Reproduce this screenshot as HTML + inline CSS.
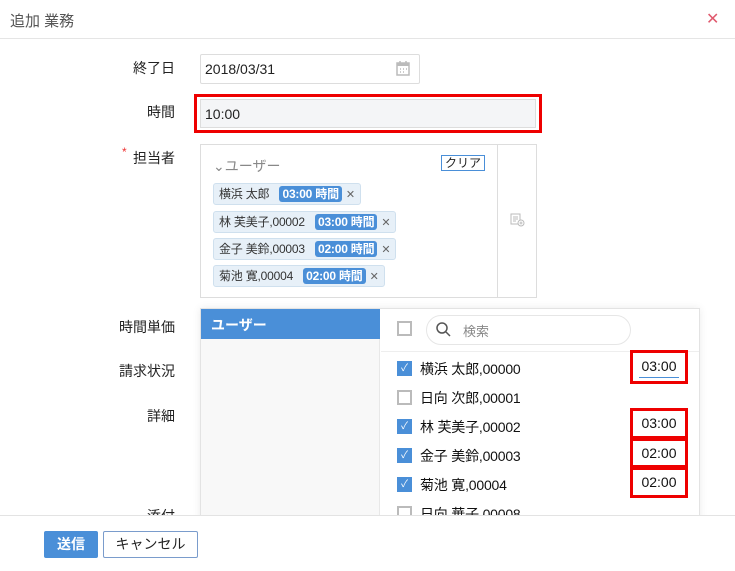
<!DOCTYPE html>
<html><head><meta charset="utf-8"><style>
*{margin:0;padding:0;box-sizing:border-box}
body{width:735px;height:571px;position:relative;overflow:hidden;background:#fff;font-family:"Liberation Sans","Noto Sans CJK JP",sans-serif;font-size:14px;color:#222}
.a{position:absolute;white-space:nowrap}
.lbl{position:absolute;right:560px;font-size:14px;color:#222}
.tag{position:absolute;left:213px;height:22px;background:#e7f0f8;border:1px solid #cfe0ee;border-radius:3px;font-size:12px;color:#333;padding:2px 5px;line-height:16px;letter-spacing:-0.2px}
.bd{display:inline-block;background:#4a8fd8;color:#fff;font-weight:bold;border-radius:3px;padding:0 3px;margin-left:7px;font-size:12px;line-height:16px}
.tx{color:#666;margin-left:4px;font-size:11px}
.cb{position:absolute;left:397px;width:15px;height:15px;border:2px solid #bbb;background:#fff}
.cb.on{background:#4a8fd8;border-color:#4a8fd8;color:#fff;font-size:10px;line-height:11px;text-align:center}
.row{position:absolute;left:420px;font-size:14px;color:#111;letter-spacing:-0.2px}
.rb{position:absolute;left:630px;width:58px;border:3px solid #e00;background:#fff;text-align:center;font-size:14px;color:#111}
</style></head><body>
<div class="a" style="left:10px;top:10px;font-size:15px;color:#555">追加 業務</div>
<div class="a" style="left:706px;top:9px;font-size:16px;color:#e05a6e">✕</div>
<div class="a" style="left:0;top:38px;width:735px;height:1px;background:#e5e5e5"></div>

<div class="lbl" style="top:58px">終了日</div>
<div class="a" style="left:200px;top:54px;width:220px;height:30px;border:1px solid #ddd;border-radius:2px;padding:6px 4px;font-size:14px">2018/03/31</div>
<svg class="a" style="left:396px;top:61px" width="14" height="15" viewBox="0 0 14 15"><rect x="1" y="2" width="12" height="12" fill="none" stroke="#bbb" stroke-width="1.5"/><rect x="1" y="2" width="12" height="3" fill="#bbb"/><path d="M4 0v3M10 0v3" stroke="#bbb" stroke-width="1.5"/><path d="M4 8h1M7 8h1M10 8h1M4 11h1M7 11h1" stroke="#bbb" stroke-width="1.5"/></svg>

<div class="lbl" style="top:102px">時間</div>
<div class="a" style="left:194px;top:94px;width:348px;height:39px;border:3px solid #e00"></div>
<div class="a" style="left:200px;top:99px;width:336px;height:29px;background:#f4f5f7;border:1px solid #ddd;padding:6px 4px">10:00</div>

<div class="a" style="left:122px;top:145px;color:#e33;font-size:12px">*</div>
<div class="lbl" style="top:148px">担当者</div>
<div class="a" style="left:200px;top:144px;width:337px;height:154px;border:1px solid #ddd"></div>
<div class="a" style="left:497px;top:144px;width:1px;height:154px;background:#ddd"></div>
<svg class="a" style="left:510px;top:213px" width="15" height="14" viewBox="0 0 15 14"><rect x="1" y="1" width="9" height="10" fill="none" stroke="#bbb"/><path d="M3 4h5M3 6h5M3 8h3" stroke="#bbb"/><circle cx="11" cy="10" r="3" fill="#fff" stroke="#bbb"/><path d="M11 8.5v3M9.5 10h3" stroke="#bbb"/></svg>
<div class="a" style="left:213px;top:156px;font-size:14px;color:#888">⌄ユーザー</div>
<div class="a" style="left:441px;top:155px;width:44px;height:16px;border:1px solid #4a8fd8;font-size:12px;line-height:14px;text-align:center;color:#222">クリア</div>
<div class="tag" style="top:183px">横浜 太郎 <span class="bd">03:00 時間</span><span class="tx">✕</span></div>
<div class="tag" style="top:211px">林 芙美子,00002 <span class="bd">03:00 時間</span><span class="tx">✕</span></div>
<div class="tag" style="top:238px">金子 美鈴,00003 <span class="bd">02:00 時間</span><span class="tx">✕</span></div>
<div class="tag" style="top:265px">菊池 寛,00004 <span class="bd">02:00 時間</span><span class="tx">✕</span></div>

<div class="lbl" style="top:317px">時間単価</div>
<div class="lbl" style="top:361px">請求状況</div>
<div class="lbl" style="top:406px">詳細</div>
<div class="lbl" style="top:506px">添付</div>

<div class="a" style="left:200px;top:308px;width:500px;height:220px;border:1px solid #e3e3e3;background:#fff;box-shadow:0 0 8px rgba(0,0,0,.08)"></div>
<div class="a" style="left:201px;top:309px;width:179px;height:220px;background:#f8f8f8;border-right:1px solid #e8e8e8"></div>
<div class="a" style="left:201px;top:309px;width:179px;height:30px;background:#4a8fd8;color:#fff;font-weight:bold;padding:6px 10px">ユーザー</div>
<div class="cb" style="top:321px"></div>
<div class="a" style="left:426px;top:315px;width:205px;height:30px;border:1px solid #e6e6e6;border-radius:15px"></div>
<svg class="a" style="left:435px;top:321px" width="16" height="16" viewBox="0 0 16 16"><circle cx="7" cy="7" r="5" fill="none" stroke="#555" stroke-width="1.5"/><path d="M11 11l4 4" stroke="#555" stroke-width="1.5"/></svg>
<div class="a" style="left:463px;top:321px;font-size:13px;color:#888">検索</div>
<div class="a" style="left:381px;top:351px;width:318px;height:1px;background:#eee"></div>

<div class="cb on" style="top:361px">✓</div><div class="row" style="top:359px">横浜 太郎,00000</div>
<div class="cb" style="top:390px"></div><div class="row" style="top:388px">日向 次郎,00001</div>
<div class="cb on" style="top:419px">✓</div><div class="row" style="top:417px">林 芙美子,00002</div>
<div class="cb on" style="top:448px">✓</div><div class="row" style="top:446px">金子 美鈴,00003</div>
<div class="cb on" style="top:477px">✓</div><div class="row" style="top:475px">菊池 寛,00004</div>
<div class="cb" style="top:506px"></div><div class="row" style="top:504px">日向 華子,00008</div>

<div class="rb" style="top:350px;height:34px;padding-top:5px">03:00<div style="position:absolute;left:6px;right:6px;bottom:3px;height:1px;background:#4a8fd8"></div></div>
<div class="rb" style="top:408px;height:31px;padding-top:4px">03:00</div>
<div class="rb" style="top:438px;height:30px;padding-top:4px">02:00</div>
<div class="rb" style="top:467px;height:31px;padding-top:4px">02:00</div>

<div class="a" style="left:0;top:515px;width:735px;height:56px;background:#fff;border-top:1px solid #e3e3e3"></div>
<div class="a" style="left:44px;top:531px;width:54px;height:27px;background:#4a8fd8;color:#fff;font-weight:bold;text-align:center;line-height:27px;border-radius:2px">送信</div>
<div class="a" style="left:103px;top:531px;width:95px;height:27px;border:1px solid #7a9ccc;text-align:center;line-height:25px;border-radius:2px">キャンセル</div>
</body></html>
